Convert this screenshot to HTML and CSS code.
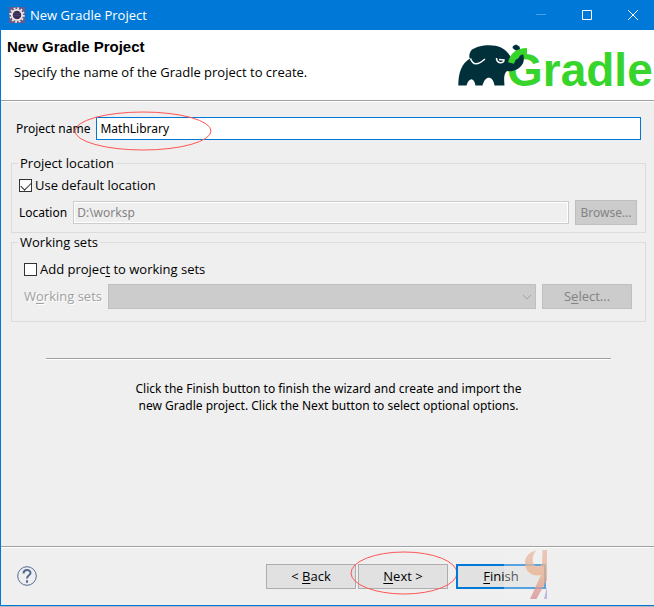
FILE: index.html
```html
<!DOCTYPE html>
<html lang="en">
<head>
    <meta charset="UTF-8">
    <meta name="viewport" content="width=device-width, initial-scale=1.0">
    <title>New Gradle Project</title>
    <link rel="stylesheet" href="styles.css">
</head>
<body>
    <form class="window" id="wizard">
        <header class="titlebar">
            <svg class="app-icon" viewBox="0 0 16 16" aria-hidden="true">
                <rect width="16" height="16" fill="#6a5a8c"/>
                <circle cx="8" cy="8" r="6.8" fill="none" stroke="#f0ece6" stroke-width="1.8" stroke-dasharray="1.8 1.76"/>
                <circle cx="8" cy="8" r="5.2" fill="#3b2d55" stroke="#f0ece6" stroke-width="1.8"/>
                <path d="M4.5 6.5h7M4.5 8.5h7" stroke="#4b3d70"/>
            </svg>
            <span class="titlebar-text">New Gradle Project</span>
            <button type="button" class="caption minimize" aria-label="Minimize" disabled>
                <svg viewBox="0 0 12 12"><path d="M1 5.5h10"/></svg>
            </button>
            <button type="button" class="caption" aria-label="Maximize">
                <svg viewBox="0 0 12 12"><path d="M1.5 1.5h9v9h-9z"/></svg>
            </button>
            <button type="button" class="caption" aria-label="Close">
                <svg viewBox="0 0 12 12"><path d="M1 1l10 10M11 1L1 11"/></svg>
            </button>
        </header>

        <section class="banner">
            <div class="banner-text">
                <h1>New Gradle Project</h1>
                <p>Specify the name of the Gradle project to create.</p>
            </div>
            <svg class="logo" viewBox="0 0 192 46" role="img" aria-label="Gradle">
                <text class="logo-text" x="49" y="43">Gradle</text>
                <path fill="#02303a" d="M0.3 42.5C0.5 30 3 21 12 15.5C10.5 14 11.5 9.5 13.5 7C19 2.5 34 0 43 4.5C48 7 51 11 53 14.5C56 18 61 17 62 12C62 10 60 8 57 7L54.5 5L55 3L58 1.5L61.5 3.5L62 6C66 9 67 17 64.5 21C61 27 54 29 49 28C45.5 31 46 36 46.5 42.5H36.5C35 32 27 32 24.5 42.500H17.5C16 34 11 34 8.5 42.5Z"/>
                <path fill="none" stroke="#37d52b" stroke-width="6" d="M53 20C55 12 61 8 69 8"/>
                <path fill="none" stroke="#fff" stroke-width="1.5" d="M12.5 15.5C15 23 20 22 27 16M38.5 15C38.5 21 46 21 46 17L41 16.5"/>
            </svg>
        </section>

        <main class="page">
            <div class="row name-row small">
                <label for="projectName">Project name</label>
                <input type="text" id="projectName" class="text-input" value="MathLibrary">
                <svg class="mark mark-name" viewBox="0 0 138 40" aria-hidden="true"><ellipse cx="69" cy="20" rx="68" ry="19"/></svg>
            </div>

            <fieldset class="group">
                <legend>Project location</legend>
                <label class="check"><input type="checkbox" checked>Use default location</label>
                <div class="row small">
                    <label for="location">Location</label>
                    <input type="text" id="location" class="text-input" value="D:\worksp" disabled>
                    <button type="button" class="btn browse" disabled>Browse...</button>
                </div>
            </fieldset>

            <fieldset class="group sets">
                <legend>Working sets</legend>
                <label class="check"><input type="checkbox"><span>Add projec<u>t</u> to working sets</span></label>
                <div class="row">
                    <label for="sets" class="off">W<u>o</u>rking sets</label>
                    <div class="combo">
                        <select id="sets" disabled></select>
                        <svg viewBox="0 0 10 6" aria-hidden="true"><path d="M1 1l4 4l4-4"/></svg>
                    </div>
                    <button type="button" class="btn" disabled>S<u>e</u>lect...</button>
                </div>
            </fieldset>

            <hr>
            <p class="hint small">Click the Finish button to finish the wizard and create and import the<br>new Gradle project. Click the Next button to select optional options.</p>
        </main>

        <footer class="buttons">
            <button type="button" class="help" aria-label="Help">
                <svg viewBox="0 0 20 20"><circle cx="10" cy="10" r="9.3"/><path d="M6.5 7.5C6.5 3 13.5 3 13.5 7C13.5 9.5 10 9 10 12.5"/><path d="M10 14.3v2.4"/></svg>
            </button>
            <button type="button" class="btn back">&lt; <u>B</u>ack</button>
            <div class="next">
                <button type="button" class="btn"><u>N</u>ext &gt;</button>
                <svg class="mark mark-next" viewBox="0 0 108 44" aria-hidden="true"><ellipse cx="54" cy="22" rx="53" ry="21"/></svg>
            </div>
            <div class="finish">
                <button type="submit" class="btn primary"><u>F</u>inish</button>
                <svg class="watermark" viewBox="0 0 43 54" aria-hidden="true">
                    <defs>
                        <linearGradient id="wm" x1="0" y1="0" x2="0" y2="1">
                            <stop offset="0" stop-color="#e9b9a9"/>
                            <stop offset="0.5" stop-color="#e9b08c"/>
                            <stop offset="1" stop-color="#d98c94"/>
                        </linearGradient>
                    </defs>
                    <path fill="#f3f3f3" fill-opacity="0.35" d="M0 0h43v54H0z"/>
                    <g opacity="0.75">
                        <path fill="url(#wm)" d="M32 2.5C25 4 21 9 21 15C21 22 26 27 32 27.5L37 27L26 51H32.5L43 32V2H38.5L38 16C36 18 34 19 32 18C28 17 27 9 32 2.5Z"/>
                        <path fill="#a9a4d6" d="M43 39L40 51H43Z"/>
                    </g>
                </svg>
            </div>
        </footer>
    </form>

    <script>
        // Nothing is sent anywhere, the wizard only shows its first page
        document.getElementById('wizard').addEventListener('submit', (e) => e.preventDefault());
    </script>
</body>
</html>
```

FILE: styles.css
```css
/* Reset & Global Styles */
* {
    margin: 0;
    padding: 0;
    box-sizing: border-box;
}
body {
    font-family: "Open Sans", "Noto Sans", sans-serif;
    font-size: 13px;
    line-height: 17px;
    color: #000;
    background: #b8b8b8;
    padding-bottom: 1px;
}
button,
input,
select {
    font: inherit;
}
u {
    text-underline-offset: 2px;
}
.small {
    font-family: "Noto Sans", "Open Sans", sans-serif;
    font-size: 12px;
}
.window {
    display: flex;
    flex-direction: column;
    min-height: calc(100vh - 1px);
    background: #efefef;
    border: 1px solid #0078d7;
    border-top: 0;
    border-right: 0;
}

/* Title bar */
.titlebar {
    display: flex;
    align-items: center;
    height: 30px;
    padding-left: 8px;
    background: #0078d7;
    color: #fff;
}
.app-icon {
    width: 16px;
    height: 16px;
    margin-right: 5px;
}
.titlebar-text {
    flex: 1;
}
.caption {
    width: 46px;
    height: 28px;
    padding-left: 4px;
    border: 0;
    background: none;
}
.caption svg {
    display: block;
    width: 12px;
    height: 12px;
    margin: 0 auto;
    fill: none;
    stroke: #fff;
}
.minimize svg {
    opacity: 0.3;
}

/* Banner */
.banner {
    display: flex;
    justify-content: space-between;
    height: 71px;
    padding: 8px 4px 0 6px;
    background: #fff;
    border-bottom: 1px solid #a0a0a0;
}
h1 {
    font-family: "Liberation Sans", Arial, sans-serif;
    font-size: 15px;
    line-height: 18px;
}
.banner-text p {
    margin: 8px 0 0 7px;
}
.logo {
    width: 192px;
    height: 46px;
    margin-top: 5px;
    overflow: visible;
}
.logo-text {
    font-family: "Liberation Sans", Arial, sans-serif;
    font-size: 46px;
    font-weight: bold;
    fill: #37d52b;
}

/* Page content */
.page {
    flex: 1;
    padding: 15px 8px 0 10px;
    border-top: 1px solid #fff;
}
.row {
    display: flex;
    align-items: center;
    gap: 6px;
}
.name-row {
    position: relative;
    margin: 0 5px 15px;
}
.text-input {
    flex: 1;
    min-width: 0;
    height: 23px;
    padding: 0 3px;
    background: #fff;
    border: 1px solid #0078d7;
    outline: none;
}
.text-input:disabled {
    background: #efefef;
    border-color: #ccc;
    box-shadow: inset 0 0 0 1px #fff;
    color: #838383;
}
.group {
    margin-bottom: 1px;
    padding: 5px 8px 7px 7px;
    border: 1px solid #dcdcdc;
}
.group legend {
    padding: 0 2px;
    margin-left: -1px;
}
.sets {
    padding: 10px 13px 12px 12px;
}
.sets legend {
    margin-left: -6px;
}
.check {
    display: flex;
    align-items: center;
    gap: 3px;
    width: max-content;
    margin-bottom: 6px;
}
.check input {
    appearance: none;
    width: 13px;
    height: 13px;
    background: #fff;
    border: 1px solid #333;
}
.check input:checked::before {
    content: "";
    display: block;
    width: 9px;
    height: 5px;
    margin: 2px 1px;
    border: solid #333;
    border-width: 0 0 1px 1px;
    transform: rotate(-45deg);
}
.off {
    color: #a0a0a0;
    text-shadow: 1px 1px #fff;
}
.btn {
    width: 90px;
    height: 25px;
    background: #e1e1e1;
    border: 1px solid #adadad;
    color: #000;
}
.btn:disabled {
    background: #ccc;
    border-color: #bfbfbf;
    color: #838383;
}
.browse {
    width: 62px;
}
.combo {
    position: relative;
    flex: 1;
}
.combo select {
    display: block;
    appearance: none;
    width: 100%;
    height: 25px;
    background: #ccc;
    border: 1px solid #bfbfbf;
    opacity: 1;
}
.combo svg {
    position: absolute;
    top: 10px;
    right: 4px;
    width: 10px;
    height: 6px;
    fill: none;
    stroke: #a0a0a0;
}
hr {
    margin: 36px 35px 0;
    border: 0;
    border-top: 1px solid #a0a0a0;
    border-bottom: 1px solid #fff;
}
.hint {
    margin-top: 20px;
    text-align: center;
}

/* Footer */
.buttons {
    display: flex;
    align-items: center;
    height: 59px;
    padding: 0 108px 0 16px;
    border-top: 1px solid #a0a0a0;
    box-shadow: inset 0 1px #fff;
}
.help {
    width: 20px;
    height: 20px;
    margin-right: auto;
    background: none;
    border: 0;
}
.help svg {
    display: block;
    fill: none;
    stroke: #526a91;
}
.help path {
    stroke-width: 2;
}
.next,
.finish {
    position: relative;
    margin-left: 2px;
}
.finish {
    margin-left: 8px;
}
.primary {
    border: 2px solid #0078d7;
}

/* Overlays */
.mark {
    position: absolute;
    fill: none;
    stroke: #f55;
    pointer-events: none;
}
.mark-name {
    width: 138px;
    height: 40px;
    left: 58px;
    top: -6px;
}
.mark-next {
    width: 108px;
    height: 44px;
    left: -8px;
    top: -13px;
}
.watermark {
    position: absolute;
    width: 43px;
    height: 54px;
    right: -1px;
    top: -16px;
    pointer-events: none;
}
```
